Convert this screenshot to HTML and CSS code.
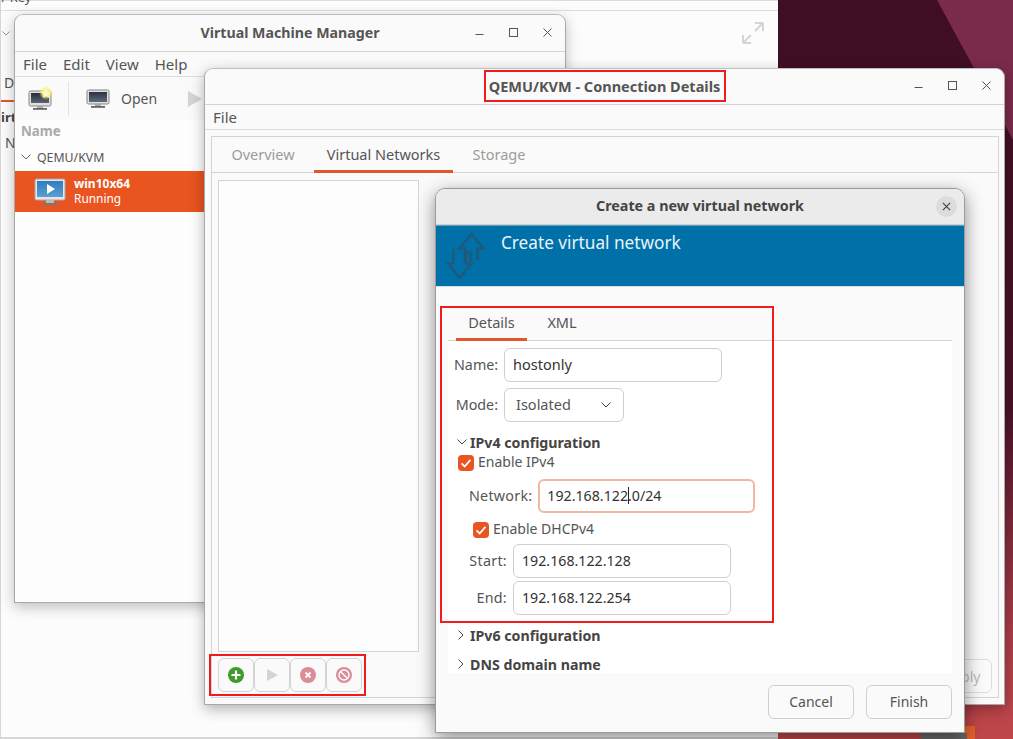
FILE: index.html
```html
<!DOCTYPE html>
<html lang="en">
<head>
<meta charset="utf-8">
<title>Connection Details</title>
<link rel="stylesheet" href="styles.css">
</head>
<body>
<div class="desktop">
  <div class="wallpaper">
    <svg class="wall-art" viewBox="0 0 235 739" preserveAspectRatio="none">
      <defs><linearGradient id="wallfade" x1="0" y1="0" x2="0" y2="1"><stop offset="0" stop-color="#3f0e24"/><stop offset=".55" stop-color="#4a1229"/><stop offset=".85" stop-color="#a83c48"/><stop offset="1" stop-color="#c0474a"/></linearGradient></defs>
      <rect width="235" height="739" fill="url(#wallfade)"/>
      <polygon points="159,0 235,0 235,140" fill="#7a2a4b"/>
      <rect x="143" y="733" width="53" height="6" fill="#6a6a6a"/>
      <polygon points="175,726 197,726 197,739 189,739 189,733 175,733" fill="#e4622a"/>
    </svg>
  </div>

  <section class="win back-win">
    <div class="back-key">r Key</div>
    <div class="back-line"></div>
    <svg class="back-chev" viewBox="0 0 10 6"><path d="M.5.5 5 5 9.500.5" fill="none" stroke="#777"/></svg>
    <span class="back-de">De</span>
    <span class="back-bar"></span>
    <span class="back-irt">irt</span>
    <span class="back-n">N</span>
    <svg class="expand" viewBox="0 0 22 22"><path d="M1 21 9 13M1 21V13M1 21H9M21 1 13 9M21 1V9M21 1H13" fill="none" stroke="#d4d4d4" stroke-width="2"/></svg>
  </section>

  <section class="win vmm">
    <header class="titlebar">
      <h1 class="title vmm-title">Virtual Machine Manager</h1>
      <div class="wm">
        <svg viewBox="0 0 12 12"><path d="M1.500 7.500H9.500" stroke="#555" fill="none"/></svg>
        <svg viewBox="0 0 12 12"><rect x="1.500" y="1.500" width="8" height="8" stroke="#555" fill="none"/></svg>
        <svg viewBox="0 0 12 12"><path d="M1.500 1.500 9.500 9.500M9.500 1.500 1.500 9.500" stroke="#555" fill="none"/></svg>
      </div>
    </header>
    <nav class="menubar"><span>File</span><span>Edit</span><span>View</span><span>Help</span></nav>
    <div class="toolbar">
      <svg class="tool-new" viewBox="0 0 25 25">
        <defs>
          <linearGradient id="scr1" x1="0" y1="0" x2="0" y2="1"><stop offset="0" stop-color="#262c38"/><stop offset="1" stop-color="#5a6478"/></linearGradient>
          <radialGradient id="glow"><stop offset=".45" stop-color="#f7f16a"/><stop offset="1" stop-color="#f7f16a" stop-opacity="0"/></radialGradient>
        </defs>
        <rect x="1" y="5" width="22" height="15" rx="1.500" fill="#e0e0e0" stroke="#858585"/>
        <rect x="3" y="7" width="18" height="10" fill="url(#scr1)"/>
        <rect x="9" y="20" width="6" height="2" fill="#a8a8a8"/><rect x="5" y="22" width="14" height="1.800" fill="#666"/>
        <circle cx="18" cy="7" r="7" fill="url(#glow)"/>
        <polygon points="18,2 19.500,5.500 23,5.800 20.400,8.200 21.200,11.700 18,9.900 14.800,11.700 15.600,8.200 13,5.800 16.500,5.500" fill="#fbf8c8"/>
      </svg>
      <span class="tool-sep"></span>
      <svg class="tool-open" viewBox="0 0 24 20">
        <defs><linearGradient id="scr2" x1="0" y1="0" x2="0" y2="1"><stop offset="0" stop-color="#2b3140"/><stop offset="1" stop-color="#5f6a80"/></linearGradient></defs>
        <rect x="1" y="1" width="22" height="14" rx="1.500" fill="#e0e0e0" stroke="#858585"/>
        <rect x="3" y="3" width="18" height="10" fill="url(#scr2)"/>
        <rect x="9" y="15" width="6" height="2" fill="#a8a8a8"/><rect x="5" y="17" width="14" height="1.800" fill="#666"/>
      </svg>
      <span class="tool-label">Open</span>
      <svg class="tool-play" viewBox="0 0 18 20"><polygon points="1,1 17,10 1,19" fill="#d4d4d4"/></svg>
    </div>
    <div class="list-head">Name</div>
    <div class="conn"><svg viewBox="0 0 10 6"><path d="M.5.5 5 5 9.500.5" fill="none" stroke="#666"/></svg>QEMU/KVM</div>
    <div class="vm-row">
      <svg class="vm-icon" viewBox="0 0 32 28">
        <defs><linearGradient id="scr3" x1="0" y1="0" x2="0" y2="1"><stop offset="0" stop-color="#2f7dbf"/><stop offset="1" stop-color="#5a9fd4"/></linearGradient></defs>
        <rect x="1" y="1" width="30" height="21" rx="1.500" fill="#e6e6e6" stroke="#a8a8a8"/>
        <rect x="3" y="3" width="26" height="16" fill="url(#scr3)"/>
        <polygon points="13,6 21,11 13,16" fill="#fff"/>
        <rect x="12" y="22" width="8" height="3" fill="#bbb"/><rect x="8" y="25" width="16" height="2" fill="#777"/>
      </svg>
      <div class="vm-text"><strong>win10x64</strong><span>Running</span></div>
    </div>
  </section>

  <section class="win details">
    <header class="titlebar details-bar">
      <h1 class="title details-title">QEMU/KVM - Connection Details</h1>
      <div class="wm wm-details">
        <svg viewBox="0 0 12 12"><path d="M1.500 7.500H9.500" stroke="#555" fill="none"/></svg>
        <svg viewBox="0 0 12 12"><rect x="1.500" y="1.500" width="8" height="8" stroke="#555" fill="none"/></svg>
        <svg viewBox="0 0 12 12"><path d="M1.500 1.500 9.500 9.500M9.500 1.500 1.500 9.500" stroke="#555" fill="none"/></svg>
      </div>
    </header>
    <nav class="menubar details-menu"><span>File</span></nav>
    <div class="notebook">
      <div class="tabs">
        <span class="tab tab-over">Overview</span>
        <span class="tab tab-active">Virtual Networks</span>
        <span class="tab tab-store">Storage</span>
      </div>
      <div class="tab-body">
        <div class="net-list"></div>
        <div class="net-tools">
          <button class="tbtn"><svg viewBox="0 0 16 16"><circle cx="8" cy="8" r="8" fill="#3f9b2b"/><path d="M8 3.500V12.500M3.500 8H12.500" stroke="#fff" stroke-width="2.200"/></svg></button>
          <button class="tbtn"><svg viewBox="0 0 16 16"><polygon points="3,2 14,8 3,14" fill="#d4d4d4"/></svg></button>
          <button class="tbtn"><svg viewBox="0 0 16 16"><circle cx="8" cy="8" r="8" fill="#d98d96"/><path d="M5.500 5.500 10.500 10.500M10.500 5.500 5.500 10.500" stroke="#fff" stroke-width="1.800"/></svg></button>
          <button class="tbtn"><svg viewBox="0 0 16 16"><circle cx="8" cy="8" r="8" fill="#d98d96"/><circle cx="8" cy="8" r="5" fill="none" stroke="#fff" stroke-width="1.400"/><path d="M4.500 4.500 11.500 11.500" stroke="#fff" stroke-width="1.400"/></svg></button>
        </div>
        <button class="apply">Apply</button>
      </div>
    </div>
  </section>

  <section class="win dialog">
    <header class="dialog-bar">
      <h2 class="title dialog-title">Create a new virtual network</h2>
      <span class="dialog-close"><svg viewBox="0 0 10 10"><path d="M1 1 9 9M9 1 1 9" stroke="#444" stroke-width="1.300" fill="none"/></svg></span>
    </header>
    <div class="banner">
      <svg class="banner-icon" viewBox="436 225 60 62">
        <path d="M477.500 260V248.500H483.500L471.500 234 459.500 248.500H465V263" fill="none" stroke="#1f5a7c" stroke-width="2.600"/>
        <path d="M453.500 249V263.500H448L459.500 278 471.500 263.500H466V252H470.500V262" fill="none" stroke="#1f5a7c" stroke-width="2.600"/>
      </svg>
      <span class="banner-text">Create virtual network</span>
    </div>
    <div class="form-area">
      <div class="subtabs">
        <span class="subtab subtab-active">Details</span>
        <span class="subtab subtab-xml">XML</span>
      </div>
      <div class="form">
        <div class="frow name-row"><label>Name:</label><div class="entry entry-name">hostonly</div></div>
        <div class="frow mode-row"><label>Mode:</label><div class="combo">Isolated<svg viewBox="0 0 10 6"><path d="M.5.5 5 5 9.500.5" fill="none" stroke="#444"/></svg></div></div>
        <div class="exp-head exp-first"><svg viewBox="0 0 10 6"><path d="M.5.5 5 5 9.500.5" fill="none" stroke="#444"/></svg>IPv4 configuration</div>
        <div class="check ck-ipv4"><span class="box"><svg viewBox="0 0 18 18"><path d="M4 9.500 7.500 13 14 5.500" fill="none" stroke="#fff" stroke-width="2"/></svg></span><span class="check-text">Enable IPv4</span></div>
        <div class="frow net-row"><label>Network:</label><div class="entry entry-net">192.168.122<i class="caret"></i>.0/24</div></div>
        <div class="check ck-dhcp"><span class="box"><svg viewBox="0 0 18 18"><path d="M4 9.500 7.500 13 14 5.500" fill="none" stroke="#fff" stroke-width="2"/></svg></span><span class="check-text">Enable DHCPv4</span></div>
        <div class="frow range-row"><label>Start:</label><div class="entry">192.168.122.128</div></div>
        <div class="frow range-row end-row"><label>End:</label><div class="entry">192.168.122.254</div></div>
        <div class="exp-head exp-v6"><svg class="side" viewBox="0 0 6 10"><path d="M.5.500 5 5 .5 9.500" fill="none" stroke="#444"/></svg>IPv6 configuration</div>
        <div class="exp-head exp-dns"><svg class="side" viewBox="0 0 6 10"><path d="M.5.500 5 5 .5 9.500" fill="none" stroke="#444"/></svg>DNS domain name</div>
      </div>
    </div>
    <footer class="dialog-foot"><button class="dbtn">Cancel</button><button class="dbtn">Finish</button></footer>
  </section>

  <span class="mark mark-title"></span>
  <span class="mark mark-tools"></span>
  <span class="mark mark-form"></span>
</div>
</body>
</html>
```
FILE: styles.css
```css
* { box-sizing: border-box; }
html, body { margin: 0; padding: 0; }
body { width: 1013px; height: 739px; overflow: hidden; font-family: "Noto Sans", "Open Sans", sans-serif; font-size: 14px; color: #4a4a4a; background: #fff; }
.desktop { position: relative; width: 1013px; height: 739px; overflow: hidden; background: #fff; }
.wallpaper { position: absolute; left: 778px; top: 0; width: 235px; height: 739px; }
.wall-art { display: block; width: 100%; height: 100%; }
.win { position: absolute; background: #fafafa; }
.title { margin: 0; font-weight: 700; color: #555; }

.back-win { left: 0; top: 0; width: 778px; height: 739px; border-left: 1px solid #d6d6d6; border-bottom: 2px solid #d6d6d6; border-top: 1px solid #ddd; background: #fcfcfc; }
.back-key { position: absolute; left: 0; top: -13px; font-size: 13px; color: #555; }
.back-line { position: absolute; left: 0; right: 0; top: 9px; border-top: 1px solid #ddd; }
.back-chev { position: absolute; left: 1px; top: 30px; width: 8px; height: 5px; }
.back-de { position: absolute; left: 3px; top: 72px; font-size: 14px; color: #555; }
.back-bar { position: absolute; left: 0; top: 99px; width: 14px; height: 2px; background: #e05a28; }
.back-irt { position: absolute; left: 0; top: 107px; font-size: 13px; font-weight: 700; color: #444; }
.back-n { position: absolute; left: 4px; top: 132px; font-size: 14px; color: #555; }
.expand { position: absolute; left: 741px; top: 21px; width: 22px; height: 22px; }

.vmm { left: 14px; top: 14px; width: 552px; height: 589px; border: 1px solid #a8a8a8; border-top-color: #bdbdbd; border-radius: 9px 9px 0 0; box-shadow: 0 4px 14px rgba(0,0,0,.25); background: #fdfdfd; }
.titlebar { display: flex; align-items: center; justify-content: center; height: 37px; padding-bottom: 2px; border-bottom: 1px solid #d4d4d4; position: relative; background: #fafafa; border-radius: 9px 9px 0 0; }
.vmm-title { font-size: 14.200px; }
.wm { position: absolute; top: 12px; right: 11px; display: flex; gap: 22px; }
.wm svg { width: 12px; height: 12px; }
.wm-details { top: 11px; }
.menubar { display: flex; height: 25px; align-items: center; background: #fafafa; border-bottom: 1px solid #dcdcdc; padding-left: 8px; gap: 16px; font-size: 15px; color: #555; }
.toolbar { display: flex; align-items: center; height: 43px; background: #fafafa; padding-left: 13px; }
.tool-new { width: 25px; height: 25px; }
.tool-sep { width: 1px; height: 34px; background: #e2e2e2; margin: 0 17px 0 15px; }
.tool-open { width: 24px; height: 20px; }
.tool-label { margin-left: 11px; font-size: 14px; color: #555; }
.tool-play { width: 16px; height: 18px; margin-left: 30px; }
.list-head { height: 23px; padding: 2px 0 0 6px; font-size: 13.300px; font-weight: 700; color: #aaa; }
.conn { display: flex; align-items: center; height: 28px; padding-left: 6px; gap: 6px; font-size: 12.300px; color: #555; }
.conn svg { width: 10px; height: 6px; }
.vm-row { display: flex; align-items: center; height: 41px; background: #e95420; color: #fff; padding-left: 19px; gap: 8px; }
.vm-icon { width: 32px; height: 28px; }
.vm-text { display: flex; flex-direction: column; font-size: 11.900px; line-height: 15px; margin-top: -2px; }
.vm-text strong { font-weight: 700; font-size: 12px; }

.details { left: 204px; top: 68px; width: 801px; height: 637px; border: 1px solid #a8a8a8; border-top-color: #c0c0c0; border-radius: 9px 9px 0 0; box-shadow: 0 4px 14px rgba(0,0,0,.3); background: #fafafa; }
.details-bar { height: 36px; }
.details-title { font-size: 14.500px; }
.notebook { margin: 6px 5px 0 6px; height: 562px; border: 1px solid #d4d4d4; display: flex; flex-direction: column; }
.tabs { display: flex; height: 36px; flex: none; border-bottom: 1px solid #d4d4d4; }
.tab { display: flex; align-items: center; justify-content: center; height: 36px; padding-top: 1px; font-size: 14.500px; color: #9c9c9c; border-bottom: 3px solid transparent; }
.tab-over { width: 102px; }
.tab-active { width: 139px; color: #555; border-bottom-color: #e0582a; }
.tab-store { width: 92px; }
.tab-body { flex: 1; padding: 7px 6px 6px; display: flex; flex-direction: column; position: relative; }
.net-list { width: 201px; height: 472px; flex: none; background: #fdfdfd; border: 1px solid #d4d4d4; }
.net-tools { display: flex; margin-top: 6px; }
.tbtn { width: 36px; height: 34px; margin: 0; padding: 0; background: #fafafa; border: 1px solid #d4d4d4; border-radius: 6px; display: flex; align-items: center; justify-content: center; }
.tbtn svg { width: 16px; height: 16px; }
.apply { position: absolute; right: 6px; bottom: 5px; width: 60px; height: 34px; border: 1px solid #dcdcdc; border-radius: 6px; background: #fafafa; color: #bbb; font: 14px "Noto Sans", sans-serif; }

.dialog { left: 435px; top: 188px; width: 530px; height: 545px; border: 1px solid #9a9a9a; border-radius: 10px 10px 0 0; box-shadow: 0 5px 18px rgba(0,0,0,.45); background: #fafafa; display: flex; flex-direction: column; }
.dialog-bar { position: relative; display: flex; align-items: center; justify-content: center; height: 36px; flex: none; padding-bottom: 2px; background: #ebebeb; border-bottom: 1px solid #d0d0d0; border-radius: 9px 9px 0 0; }
.dialog-title { font-size: 14.300px; color: #444; }
.dialog-close { position: absolute; right: 7px; top: 7px; width: 21px; height: 21px; border-radius: 50%; background: #dcdcdc; display: flex; align-items: center; justify-content: center; }
.dialog-close svg { width: 9px; height: 9px; }
.banner { position: relative; flex: none; height: 62px; background: #0070a8; padding: 5px 0 0 65px; border-top: 1px solid #5f9fc2; border-bottom: 1px solid #cfe0ea; }
.banner-text { font-size: 17.200px; color: #e8f4fa; }
.banner-icon { position: absolute; left: 0; top: -1px; width: 60px; height: 62px; }
.form-area { flex: none; height: 367px; margin: 19px 12px 0 12px; background: #fff; overflow: hidden; }
.subtabs { display: flex; height: 35px; background: #fafafa; border-bottom: 1px solid #d4d4d4; padding-left: 8px; }
.subtab { display: flex; align-items: center; justify-content: center; height: 35px; font-size: 14.500px; color: #555; border-bottom: 3px solid transparent; width: 71px; }
.subtab-active { border-bottom-color: #e0582a; }
.subtab-xml { width: 30px; margin-left: 20px; }
.form { display: flex; flex-direction: column; padding-left: 6px; }
.frow { display: flex; align-items: center; gap: 6px; }
.frow label { color: #555; font-size: 14.300px; text-align: right; padding-bottom: 2px; }
.entry { width: 218px; height: 34px; flex: none; border: 1px solid #cfcfcf; border-radius: 6px; padding: 0 8px 2px; display: flex; align-items: center; background: #fff; color: #333; font-size: 14.200px; }
.entry-name { font-size: 14.500px; }
.name-row { margin-top: 7px; }
.mode-row { margin-top: 6px; }
.name-row label, .mode-row label { width: 44px; }
.combo { width: 120px; height: 34px; border: 1px solid #cfcfcf; border-radius: 6px; padding: 0 12px 2px 11px; display: flex; align-items: center; justify-content: space-between; font-size: 14.500px; color: #555; }
.combo svg { width: 10px; height: 6px; margin-top: 2px; }
.exp-head { display: flex; align-items: center; flex: none; font-size: 14.200px; font-weight: 700; color: #444; height: 20px; padding-bottom: 2px; }
.exp-head svg { width: 10px; height: 6px; margin: 0 3px; }
.exp-head svg.side { width: 6px; height: 10px; margin: 0 6px 0 4px; }
.exp-first { margin-top: 11px; }
.check { display: flex; align-items: center; flex: none; gap: 4px; font-size: 14px; color: #555; height: 18px; }
.check-text { margin-top: -3px; }
.box { width: 16px; height: 16px; background: #e95420; border-radius: 4px; display: flex; }
.box svg { width: 16px; height: 16px; }
.ck-ipv4 { margin-left: 4px; margin-top: 1px; }
.net-row { margin-top: 7px; margin-left: 15px; }
.net-row label { letter-spacing: .25px; }
.entry-net { width: 217px; border: 2px solid #eeb8a2; padding-left: 7px; }
.caret { display: inline-block; width: 1px; height: 17px; background: #222; margin-right: -1px; }
.ck-dhcp { margin-left: 19px; margin-top: 8px; }
.range-row { margin-top: 5px; }
.range-row label { width: 53px; letter-spacing: .3px; }
.end-row { margin-top: 3px; }
.exp-v6 { margin-top: 11px; }
.exp-dns { margin-top: 9px; }
.dialog-foot { display: flex; justify-content: flex-end; gap: 12px; padding: 12px 12px 0 0; background: #fafafa; }
.dbtn { width: 86px; height: 34px; padding: 0 0 2px; background: #fafafa; border: 1px solid #cfcfcf; border-radius: 6px; font: 14px "Noto Sans", sans-serif; color: #555; }

.mark { position: absolute; border: 2px solid #f01c1c; pointer-events: none; }
.mark-title { left: 484px; top: 70px; width: 242px; height: 32px; }
.mark-tools { left: 209px; top: 654px; width: 157px; height: 42px; }
.mark-form { left: 440px; top: 306px; width: 334px; height: 317px; }
```
